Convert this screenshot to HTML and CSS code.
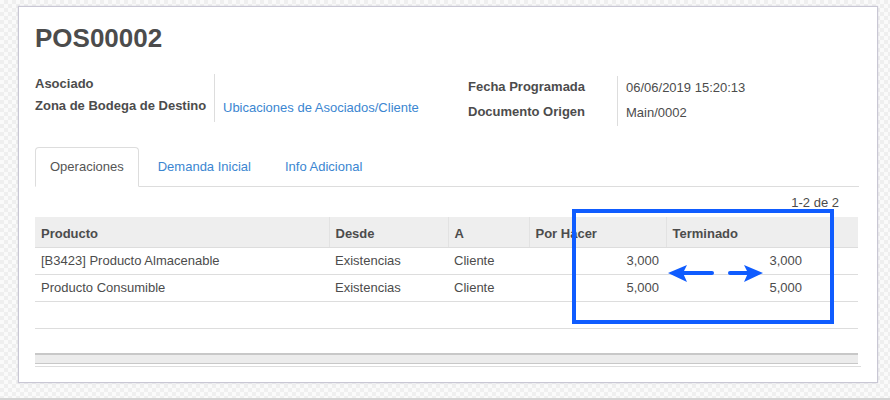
FILE: index.html
```html
<!DOCTYPE html>
<html>
<head>
<meta charset="utf-8">
<link rel="stylesheet" href="styles.css">
</head>
<body>
<div class="page">
  <div class="sheet">
    <h1 class="title">POS00002</h1>
    <div class="groups">
      <div class="group group-left">
        <div class="lbl r1">Asociado</div><div class="val r1"></div>
        <div class="lbl r2">Zona de Bodega de Destino</div><div class="val r2"><a class="link">Ubicaciones de Asociados/Cliente</a></div>
      </div>
      <div class="group group-right">
        <div class="lbl r3">Fecha Programada</div><div class="val r3">06/06/2019 15:20:13</div>
        <div class="lbl r3">Documento Origen</div><div class="val r3">Main/0002</div>
      </div>
    </div>
    <div class="tabs">
      <div class="tab active">Operaciones</div>
      <div class="tab">Demanda Inicial</div>
      <div class="tab">Info Adicional</div>
    </div>
    <div class="pager">1-2 de 2</div>
    <table class="list">
      <colgroup>
        <col class="c-prod"><col class="c-desde"><col class="c-a"><col class="c-hacer"><col class="c-term"><col class="c-x">
      </colgroup>
      <thead>
        <tr><th>Producto</th><th>Desde</th><th>A</th><th>Por Hacer</th><th class="nosep">Terminado</th><th class="nosep"></th></tr>
      </thead>
      <tbody>
        <tr><td>[B3423] Producto Almacenable</td><td>Existencias</td><td>Cliente</td><td class="num">3,000</td><td class="num">3,000</td><td></td></tr>
        <tr><td>Producto Consumible</td><td>Existencias</td><td>Cliente</td><td class="num">5,000</td><td class="num">5,000</td><td></td></tr>
        <tr class="empty"><td colspan="6"></td></tr>
        <tr class="empty last"><td colspan="6"></td></tr>
      </tbody>
      <tfoot>
        <tr><td colspan="6"></td></tr>
      </tfoot>
    </table>
    <div class="under"></div>
  </div>
  <svg class="annot" width="890" height="400" viewBox="0 0 890 400">
    <rect x="574" y="211" width="258" height="111" fill="none" stroke="#0f5cff" stroke-width="4"/>
    <line x1="683" y1="273" x2="712" y2="273" stroke="#0f5cff" stroke-width="4" stroke-linecap="round"/>
    <path d="M668 273 L687 265 L683 273 L687 282 Z" fill="#0f5cff"/>
    <line x1="730" y1="273" x2="748" y2="273" stroke="#0f5cff" stroke-width="4" stroke-linecap="round"/>
    <path d="M763 273 L744 265 L748 273 L744 282 Z" fill="#0f5cff"/>
  </svg>
</div>
</body>
</html>
```
FILE: styles.css
```css
html, body {
  margin: 0;
  padding: 0;
}
body {
  width: 890px;
  height: 400px;
  overflow: hidden;
  font-family: "Liberation Sans", Arial, sans-serif;
  font-size: 13px;
  color: #4c4c4c;
  background: repeating-conic-gradient(#efefef 0 25%, #fafafa 0 50%) 0 0 / 8px 8px;
}
.page {
  position: relative;
  width: 890px;
  height: 400px;
  box-sizing: border-box;
  padding: 6px 0 0 18px;
  border-bottom: 2px solid #d4d4d4;
}
.sheet {
  box-sizing: border-box;
  width: 860px;
  height: 377px;
  background: #fff;
  border: 1px solid #c9c7d4;
  box-shadow: 0 0 2px rgba(120, 115, 150, 0.25);
  padding: 0 18px 0 16px;
}
.title {
  margin: 0;
  padding-top: 17px;
  font-size: 26px;
  line-height: 29px;
  font-weight: bold;
  color: #4c4c4c;
}
.groups {
  display: grid;
  grid-template-columns: 433px 1fr;
  margin-top: 21px;
}
.group {
  display: grid;
  align-content: start;
}
.group-left {
  grid-template-columns: 180px 1fr;
}
.group-right {
  grid-template-columns: 150px 1fr;
  margin-top: 2px;
}
.lbl {
  font-weight: bold;
  border-right: 1px solid #ddd;
  line-height: 16px;
}
.val {
  padding-left: 8px;
  line-height: 16px;
}
.r1 { height: 21px; padding-top: 2px; box-sizing: border-box; }
.lbl.r2 { height: 27px; padding-top: 3px; box-sizing: border-box; }
.val.r2 { height: 27px; padding-top: 5px; box-sizing: border-box; }
.lbl.r3 { height: 25px; padding-top: 3px; box-sizing: border-box; }
.val.r3 { height: 25px; padding-top: 4px; box-sizing: border-box; }
.link {
  color: #3b86d1;
  text-decoration: none;
}
.tabs {
  display: flex;
  margin-top: 21px;
  border-bottom: 1px solid #ddd;
  height: 39px;
}
.tab {
  height: 39px;
  box-sizing: border-box;
  padding: 0 14px;
  line-height: 38px;
  color: #3b86d1;
  margin-right: 4px;
  border: 1px solid transparent;
  border-radius: 4px 4px 0 0;
}
.tab.active {
  color: #555;
  border-color: #ddd;
  border-bottom-color: #fff;
  background: #fff;
  height: 40px;
}
.pager {
  text-align: right;
  padding-right: 20px;
  line-height: 16px;
  margin-top: 8px;
  height: 22px;
}
.list {
  width: 823px;
  border-collapse: collapse;
  table-layout: fixed;
}
.c-prod { width: 294px; }
.c-desde { width: 119px; }
.c-a { width: 81px; }
.c-hacer { width: 137px; }
.c-term { width: 143px; }
.c-x { width: 49px; }
.list th {
  background: #eee;
  text-align: left;
  font-weight: bold;
  height: 30px;
  padding: 5px 6px 0;
  box-sizing: border-box;
  border-right: 1px solid #e2e2e2;
  border-bottom: 1px solid #ddd;
  line-height: 16px;
}
.list th.nosep { border-right: none; }
.list td {
  height: 27px;
  padding: 0 6px;
  box-sizing: border-box;
  border-bottom: 1px solid #ddd;
  line-height: 16px;
}
.list td.num {
  text-align: right;
  padding-right: 7px;
}
.list tr.last td {
  height: 26px;
  border-bottom: none;
}
.list tfoot td {
  height: 9px;
  padding: 0;
  background: #ececec;
  border-top: 2px solid #c8c8c8;
  border-bottom: 1px solid #c8c8c8;
}
.under {
  margin-top: 2px;
  width: 826px;
  height: 1px;
  background: #ddd;
}
.annot {
  position: absolute;
  left: 0;
  top: 0;
}
```
